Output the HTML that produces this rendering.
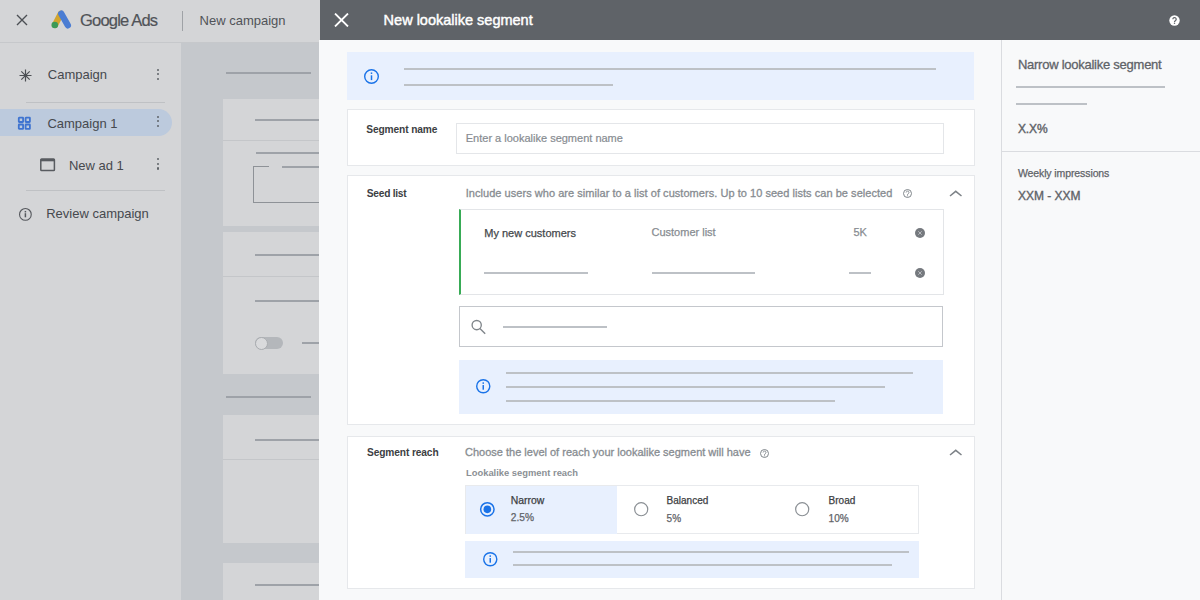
<!DOCTYPE html>
<html><head><meta charset="utf-8">
<style>
*{box-sizing:border-box;margin:0;padding:0}
html,body{width:1200px;height:600px;overflow:hidden;background:#f8f9fa;font-family:"Liberation Sans",sans-serif}
.a{position:absolute}
.t{position:absolute;white-space:nowrap;line-height:1}
</style></head><body>
<div class="a" style="left:0px;top:0px;width:320px;height:600px;background:#d4d5d7;"></div>
<div class="a" style="left:0px;top:42px;width:320px;height:1px;background:#c6c8cb;"></div>
<div class="a" style="left:181px;top:43px;width:139px;height:557px;background:#c5c8cc;"></div>
<svg class="a" style="left:16px;top:14px" width="12" height="12" viewBox="0 0 12 12"><path d="M1 1L11 11M11 1L1 11" stroke="#4c4f54" stroke-width="1.4" fill="none"/></svg>
<svg class="a" style="left:48px;top:8px" width="26" height="24" viewBox="0 0 26 24">
<path d="M12.8 5.8 L7 17" stroke="#d2a52e" stroke-width="6.2" stroke-linecap="round"/>
<path d="M13.3 5.7 L19.8 17.3" stroke="#4b7dd3" stroke-width="6.4" stroke-linecap="round"/>
<circle cx="6.8" cy="17" r="3.3" fill="#3b9a57"/>
</svg>
<div class="t" style="left:80.00px;top:11.73px;font-size:16.5px;color:#505358;-webkit-text-stroke:0.2px #505358;letter-spacing:-0.8px">Google Ads</div>
<div class="a" style="left:182px;top:11px;width:1px;height:20px;background:#9fa2a6;"></div>
<div class="t" style="left:199.60px;top:13.80px;font-size:13px;color:#505358">New campaign</div>
<svg class="a" style="left:19px;top:69px" width="13" height="13" viewBox="0 0 13 13"><path d="M6.5 0.5V12.5M0.5 6.5H12.5M2.3 2.3L10.7 10.7M10.7 2.3L2.3 10.7" stroke="#4c4f54" stroke-width="1.2"/></svg>
<div class="t" style="left:47.80px;top:68.20px;font-size:13px;color:#46494e">Campaign</div>
<div class="a" style="left:157px;top:68.5px;width:2.4px;height:2.4px;background:#5f6368;border-radius:50%"></div>
<div class="a" style="left:157px;top:73.1px;width:2.4px;height:2.4px;background:#5f6368;border-radius:50%"></div>
<div class="a" style="left:157px;top:77.7px;width:2.4px;height:2.4px;background:#5f6368;border-radius:50%"></div>
<div class="a" style="left:26px;top:102px;width:139px;height:1px;background:#bfc1c4;"></div>
<div class="a" style="left:0px;top:109px;width:172px;height:27px;background:#bccadd;border-radius:0 13.5px 13.5px 0"></div>
<svg class="a" style="left:17px;top:116px" width="15" height="15" viewBox="0 0 15 15"><g fill="none" stroke="#3f74d0" stroke-width="1.8"><rect x="1.8" y="1.7" width="4.3" height="4.3" rx="0.4"/><rect x="8.6" y="1.7" width="4.3" height="4.3" rx="0.4"/><rect x="1.8" y="8.5" width="4.3" height="4.3" rx="0.4"/><rect x="8.6" y="8.5" width="4.3" height="4.3" rx="0.4"/></g></svg>
<div class="t" style="left:47.40px;top:116.70px;font-size:13px;color:#46494e">Campaign 1</div>
<div class="a" style="left:157px;top:115.5px;width:2.4px;height:2.4px;background:#5f6368;border-radius:50%"></div>
<div class="a" style="left:157px;top:120.1px;width:2.4px;height:2.4px;background:#5f6368;border-radius:50%"></div>
<div class="a" style="left:157px;top:124.7px;width:2.4px;height:2.4px;background:#5f6368;border-radius:50%"></div>
<svg class="a" style="left:40px;top:158px" width="16" height="14" viewBox="0 0 16 14"><rect x="0.8" y="1.0" width="13.6" height="11.6" rx="0.8" fill="none" stroke="#585b60" stroke-width="1.5"/><rect x="0.8" y="1.0" width="13.6" height="2.3" fill="#585b60"/></svg>
<div class="t" style="left:68.90px;top:159.20px;font-size:13px;color:#46494e">New ad 1</div>
<div class="a" style="left:157px;top:158.0px;width:2.4px;height:2.4px;background:#5f6368;border-radius:50%"></div>
<div class="a" style="left:157px;top:162.6px;width:2.4px;height:2.4px;background:#5f6368;border-radius:50%"></div>
<div class="a" style="left:157px;top:167.2px;width:2.4px;height:2.4px;background:#5f6368;border-radius:50%"></div>
<div class="a" style="left:26px;top:189.5px;width:139px;height:1px;background:#bfc1c4;"></div>
<svg class="a" style="left:17.70px;top:207.10px" width="14.8" height="14.8" viewBox="0 0 14.8 14.8"><circle cx="7.4" cy="7.4" r="5.85" fill="none" stroke="#55585d" stroke-width="1.1"/><rect x="6.65" y="6.20" width="1.5" height="4.10" fill="#55585d"/><rect x="6.65" y="3.94" width="1.5" height="1.5" fill="#55585d"/></svg>
<div class="t" style="left:46.20px;top:207.30px;font-size:13px;color:#46494e">Review campaign</div>
<div class="a" style="left:226px;top:71.7px;width:85px;height:2px;background:#9ea2a8;"></div>
<div class="a" style="left:223px;top:99px;width:97px;height:127px;background:#d4d5d7;"></div>
<div class="a" style="left:223px;top:140px;width:97px;height:1px;background:#c4c6c9;"></div>
<div class="a" style="left:255px;top:119.0px;width:65px;height:2px;background:#9ea2a8;"></div>
<div class="a" style="left:256px;top:151.7px;width:64px;height:2px;background:#9ea2a8;"></div>
<div class="a" style="left:253px;top:166px;width:67px;height:37px;background:transparent;border:1px solid #8e9297;border-right:none"></div>
<div class="a" style="left:269px;top:165px;width:13px;height:3px;background:#d4d5d7;"></div>
<div class="a" style="left:282px;top:165.5px;width:38px;height:2px;background:#9ea2a8;"></div>
<div class="a" style="left:223px;top:232px;width:97px;height:142px;background:#d4d5d7;"></div>
<div class="a" style="left:223px;top:276px;width:97px;height:1px;background:#c4c6c9;"></div>
<div class="a" style="left:255px;top:254.0px;width:65px;height:2px;background:#9ea2a8;"></div>
<div class="a" style="left:255px;top:300.0px;width:65px;height:2px;background:#9ea2a8;"></div>
<div class="a" style="left:255px;top:337px;width:28px;height:12px;background:#b4b7bb;border-radius:6px"></div>
<div class="a" style="left:255px;top:337px;width:13px;height:13px;background:#d9dadc;border-radius:50%;border:1px solid #a9acb0"></div>
<div class="a" style="left:302px;top:342.0px;width:18px;height:2px;background:#9ea2a8;"></div>
<div class="a" style="left:226px;top:395.8px;width:85px;height:2px;background:#9ea2a8;"></div>
<div class="a" style="left:223px;top:415px;width:97px;height:128px;background:#d4d5d7;"></div>
<div class="a" style="left:223px;top:459px;width:97px;height:1px;background:#c4c6c9;"></div>
<div class="a" style="left:255px;top:439.4px;width:65px;height:2px;background:#9ea2a8;"></div>
<div class="a" style="left:223px;top:563px;width:97px;height:37px;background:#d4d5d7;"></div>
<div class="a" style="left:255px;top:583.8px;width:65px;height:2px;background:#9ea2a8;"></div>
<div class="a" style="left:319px;top:40px;width:2px;height:560px;background:#f8f9fa;"></div>
<div class="a" style="left:320px;top:0px;width:880px;height:40px;background:#5f6368;"></div>
<svg class="a" style="left:334px;top:13px" width="15" height="14" viewBox="0 0 15 14"><path d="M1 0.5L14 13.5M14 0.5L1 13.5" stroke="#fff" stroke-width="1.8" fill="none"/></svg>
<div class="t" style="left:383.60px;top:12.73px;font-size:14.5px;color:#fff;-webkit-text-stroke:0.45px #fff">New lookalike segment</div>
<svg class="a" style="left:1169px;top:15px" width="11" height="11" viewBox="0 0 11 11"><circle cx="5.5" cy="5.5" r="5.2" fill="#fff"/><path d="M3.9 4.2a1.65 1.65 0 1 1 2.7 1.3c-0.7 0.5-1.1 0.8-1.1 1.6" fill="none" stroke="#5f6368" stroke-width="1.25"/><circle cx="5.5" cy="8.3" r="0.72" fill="#5f6368"/></svg>
<div class="a" style="left:1001px;top:40px;width:1px;height:560px;background:#dadce0;"></div>
<div class="t" style="left:1017.90px;top:57.90px;font-size:13px;color:#5f6368;-webkit-text-stroke:0.3px #5f6368;letter-spacing:-0.25px">Narrow lookalike segment</div>
<div class="a" style="left:1016px;top:86.2px;width:149.2px;height:2px;background:#bdc1c6;"></div>
<div class="a" style="left:1016px;top:103.4px;width:71.2px;height:2px;background:#bdc1c6;"></div>
<div class="t" style="left:1017.90px;top:123.14px;font-size:12px;color:#5f6368;-webkit-text-stroke:0.4px #5f6368;letter-spacing:-0.1px">X.X%</div>
<div class="a" style="left:1001px;top:150.5px;width:199px;height:1px;background:#dadce0;"></div>
<div class="t" style="left:1017.90px;top:167.71px;font-size:10.5px;color:#5f6368;-webkit-text-stroke:0.25px #5f6368;letter-spacing:-0.1px">Weekly impressions</div>
<div class="t" style="left:1017.90px;top:189.54px;font-size:12px;color:#5f6368;-webkit-text-stroke:0.35px #5f6368">XXM - XXM</div>
<div class="a" style="left:347px;top:52px;width:627px;height:47.5px;background:#e8f0fe;"></div>
<svg class="a" style="left:363.00px;top:68.25px" width="17" height="17" viewBox="0 0 17 17"><circle cx="8.5" cy="8.5" r="6.80" fill="none" stroke="#1a73e8" stroke-width="1.4"/><rect x="7.75" y="7.30" width="1.5" height="4.80" fill="#1a73e8"/><rect x="7.75" y="4.45" width="1.5" height="1.5" fill="#1a73e8"/></svg>
<div class="a" style="left:403.75px;top:67.75px;width:531.75px;height:2px;background:#bdc1c6;"></div>
<div class="a" style="left:403.75px;top:83.5px;width:209.25px;height:2px;background:#bdc1c6;"></div>
<div class="a" style="left:347px;top:109px;width:628px;height:57px;background:#fff;border:1px solid #e6e8eb"></div>
<div class="t" style="left:366.25px;top:124.57px;font-size:10.2px;color:#3c4043;font-weight:700;letter-spacing:-0.12px">Segment name</div>
<div class="a" style="left:455.75px;top:123.25px;width:488px;height:30.5px;background:#fff;border:1px solid #e4e6e9"></div>
<div class="t" style="left:465.75px;top:133.19px;font-size:11px;color:#878c91;-webkit-text-stroke:0.2px #878c91">Enter a lookalike segment name</div>
<div class="a" style="left:347px;top:175px;width:628px;height:250px;background:#fff;border:1px solid #e6e8eb"></div>
<div class="t" style="left:366.75px;top:188.87px;font-size:10.2px;color:#3c4043;font-weight:700;letter-spacing:-0.25px">Seed list</div>
<div class="t" style="left:465.75px;top:188.19px;font-size:11px;color:#878c91;-webkit-text-stroke:0.3px #878c91;letter-spacing:0.04px">Include users who are similar to a list of customers. Up to 10 seed lists can be selected</div>
<svg class="a" style="left:902.00px;top:188.20px" width="11" height="11" viewBox="0 0 11 11"><circle cx="5.5" cy="5.5" r="4.00" fill="none" stroke="#80868b" stroke-width="1"/><path d="M4.15 4.50a1.4 1.4 0 1 1 2.25 1.1c-0.55 0.4-0.9 0.6-0.9 1.35" fill="none" stroke="#80868b" stroke-width="0.95"/><circle cx="5.5" cy="7.85" r="0.55" fill="#80868b"/></svg>
<svg class="a" style="left:949px;top:190px" width="13.5" height="7.5" viewBox="0 0 13.5 7.5"><path d="M1 6.0 L6.75 1.3 L12.5 6.0" fill="none" stroke="#7d8287" stroke-width="1.5"/></svg>
<div class="a" style="left:458.5px;top:209.25px;width:485px;height:85.5px;background:#fff;border:1px solid #e3e5e8;border-left:2.5px solid #38ab56"></div>
<div class="t" style="left:484.25px;top:227.69px;font-size:11px;color:#45484c;-webkit-text-stroke:0.25px #45484c">My new customers</div>
<div class="t" style="left:651.50px;top:227.29px;font-size:11px;color:#878c91;-webkit-text-stroke:0.25px #878c91">Customer list</div>
<div class="t" style="left:853.40px;top:227.29px;font-size:11px;color:#878c91;-webkit-text-stroke:0.25px #878c91">5K</div>
<svg class="a" style="left:914.50px;top:228.00px" width="10" height="10" viewBox="0 0 10 10"><circle cx="5.0" cy="5.0" r="5.0" fill="#75797e"/><path d="M3.3 3.3L6.7 6.7M6.7 3.3L3.3 6.7" stroke="#d0d2d5" stroke-width="0.75"/></svg>
<div class="a" style="left:484px;top:271.5px;width:103.5px;height:2px;background:#bdc1c6;"></div>
<div class="a" style="left:651.5px;top:271.6px;width:103.5px;height:2px;background:#bdc1c6;"></div>
<div class="a" style="left:849px;top:271.6px;width:22px;height:2px;background:#bdc1c6;"></div>
<svg class="a" style="left:914.50px;top:268.00px" width="10" height="10" viewBox="0 0 10 10"><circle cx="5.0" cy="5.0" r="5.0" fill="#75797e"/><path d="M3.3 3.3L6.7 6.7M6.7 3.3L3.3 6.7" stroke="#d0d2d5" stroke-width="0.75"/></svg>
<div class="a" style="left:459.25px;top:305.5px;width:484px;height:41px;background:#fff;border:1px solid #c4c7cc"></div>
<svg class="a" style="left:470px;top:319px" width="17" height="17" viewBox="0 0 17 17"><circle cx="6.7" cy="6.1" r="4.6" fill="none" stroke="#80868b" stroke-width="1.35"/><path d="M9.9 9.5L15.2 14.8" stroke="#80868b" stroke-width="1.4"/></svg>
<div class="a" style="left:503px;top:325.75px;width:104px;height:2px;background:#bdc1c6;"></div>
<div class="a" style="left:459.25px;top:360px;width:484px;height:54px;background:#e8f0fe;"></div>
<svg class="a" style="left:475.25px;top:378.00px" width="16.5" height="16.5" viewBox="0 0 16.5 16.5"><circle cx="8.25" cy="8.25" r="6.55" fill="none" stroke="#1a73e8" stroke-width="1.4"/><rect x="7.50" y="7.05" width="1.5" height="4.64" fill="#1a73e8"/><rect x="7.50" y="4.33" width="1.5" height="1.5" fill="#1a73e8"/></svg>
<div class="a" style="left:506.25px;top:372.25px;width:406.75px;height:2px;background:#bdc1c6;"></div>
<div class="a" style="left:506.25px;top:385.75px;width:378.75px;height:2px;background:#bdc1c6;"></div>
<div class="a" style="left:506.25px;top:400.0px;width:328.75px;height:2px;background:#bdc1c6;"></div>
<div class="a" style="left:347px;top:436px;width:628px;height:153px;background:#fff;border:1px solid #e6e8eb"></div>
<div class="t" style="left:367.00px;top:447.67px;font-size:10.2px;color:#3c4043;font-weight:700;letter-spacing:-0.12px">Segment reach</div>
<div class="t" style="left:465.00px;top:446.99px;font-size:11px;color:#878c91;-webkit-text-stroke:0.3px #878c91">Choose the level of reach your lookalike segment will have</div>
<svg class="a" style="left:759.30px;top:447.70px" width="11" height="11" viewBox="0 0 11 11"><circle cx="5.5" cy="5.5" r="4.00" fill="none" stroke="#80868b" stroke-width="1"/><path d="M4.15 4.50a1.4 1.4 0 1 1 2.25 1.1c-0.55 0.4-0.9 0.6-0.9 1.35" fill="none" stroke="#80868b" stroke-width="0.95"/><circle cx="5.5" cy="7.85" r="0.55" fill="#80868b"/></svg>
<svg class="a" style="left:949px;top:449.2px" width="13.5" height="7.5" viewBox="0 0 13.5 7.5"><path d="M1 6.0 L6.75 1.3 L12.5 6.0" fill="none" stroke="#7d8287" stroke-width="1.5"/></svg>
<div class="t" style="left:466.00px;top:468.24px;font-size:9.4px;color:#8b9095;font-weight:700">Lookalike segment reach</div>
<div class="a" style="left:465px;top:485.2px;width:453.6px;height:49.3px;background:#fff;border:1px solid #e8eaed"></div>
<div class="a" style="left:465.5px;top:485.7px;width:151.3px;height:48.3px;background:#e8f0fe;"></div>
<svg class="a" style="left:478.65px;top:500.65px" width="16.7" height="16.7" viewBox="0 0 16.7 16.7"><circle cx="8.35" cy="8.35" r="6.70" fill="none" stroke="#1a73e8" stroke-width="1.5"/><circle cx="8.35" cy="8.35" r="3.82" fill="#1a73e8"/></svg>
<div class="t" style="left:510.80px;top:496.00px;font-size:10.4px;color:#3c4043;-webkit-text-stroke:0.25px #3c4043">Narrow</div>
<div class="t" style="left:510.80px;top:513.37px;font-size:10.2px;color:#5f6368;-webkit-text-stroke:0.25px #5f6368">2.5%</div>
<svg class="a" style="left:632.60px;top:500.80px" width="16.4" height="16.4" viewBox="0 0 16.4 16.4"><circle cx="8.2" cy="8.2" r="6.55" fill="none" stroke="#8a8f94" stroke-width="1.2"/></svg>
<div class="t" style="left:666.60px;top:495.54px;font-size:10px;color:#3c4043;-webkit-text-stroke:0.25px #3c4043">Balanced</div>
<div class="t" style="left:666.60px;top:513.53px;font-size:10px;color:#5f6368;-webkit-text-stroke:0.25px #5f6368">5%</div>
<svg class="a" style="left:793.60px;top:500.80px" width="16.4" height="16.4" viewBox="0 0 16.4 16.4"><circle cx="8.2" cy="8.2" r="6.55" fill="none" stroke="#8a8f94" stroke-width="1.2"/></svg>
<div class="t" style="left:828.60px;top:495.54px;font-size:10px;color:#3c4043;-webkit-text-stroke:0.25px #3c4043">Broad</div>
<div class="t" style="left:828.60px;top:513.53px;font-size:10px;color:#5f6368;-webkit-text-stroke:0.25px #5f6368">10%</div>
<div class="a" style="left:464.6px;top:541px;width:454.4px;height:37px;background:#e8f0fe;"></div>
<svg class="a" style="left:482.15px;top:551.35px" width="16.5" height="16.5" viewBox="0 0 16.5 16.5"><circle cx="8.25" cy="8.25" r="6.55" fill="none" stroke="#1a73e8" stroke-width="1.4"/><rect x="7.50" y="7.05" width="1.5" height="4.64" fill="#1a73e8"/><rect x="7.50" y="4.33" width="1.5" height="1.5" fill="#1a73e8"/></svg>
<div class="a" style="left:512.8px;top:550.8px;width:396.6px;height:2px;background:#bdc1c6;"></div>
<div class="a" style="left:512.8px;top:564.4px;width:379.2px;height:2px;background:#bdc1c6;"></div>
</body></html>
